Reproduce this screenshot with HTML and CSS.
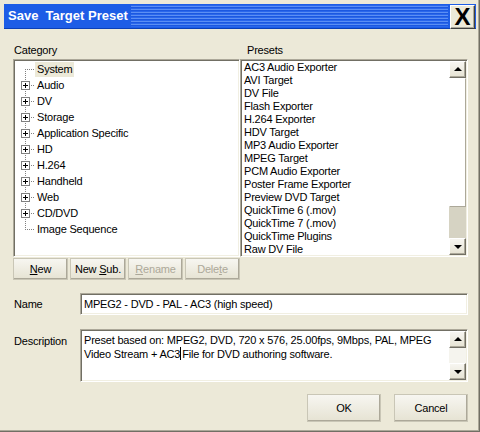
FILE: index.html
```html
<!DOCTYPE html>
<html lang="en">
<head>
    <meta charset="UTF-8">
    <title>Save Target Preset</title>
    <link rel="stylesheet" href="styles.css">
</head>
<body>
    <div class="window">
        <div class="titlebar">
            <span class="title">Save&nbsp; Target Preset</span>
            <span class="stripes"></span>
            <span class="close">X</span>
        </div>

        <div class="content">
            <div class="lists">
                <div class="col">
                    <div class="label">Category</div>
                    <div class="box tree">
                        <div class="node first"><span class="branch"></span><span class="text selected">System</span></div>
                        <div class="node"><span class="branch"><span class="plus"></span></span><span class="text">Audio</span></div>
                        <div class="node"><span class="branch"><span class="plus"></span></span><span class="text">DV</span></div>
                        <div class="node"><span class="branch"><span class="plus"></span></span><span class="text">Storage</span></div>
                        <div class="node"><span class="branch"><span class="plus"></span></span><span class="text">Application Specific</span></div>
                        <div class="node"><span class="branch"><span class="plus"></span></span><span class="text">HD</span></div>
                        <div class="node"><span class="branch"><span class="plus"></span></span><span class="text">H.264</span></div>
                        <div class="node"><span class="branch"><span class="plus"></span></span><span class="text">Handheld</span></div>
                        <div class="node"><span class="branch"><span class="plus"></span></span><span class="text">Web</span></div>
                        <div class="node"><span class="branch"><span class="plus"></span></span><span class="text">CD/DVD</span></div>
                        <div class="node last"><span class="branch"></span><span class="text">Image Sequence</span></div>
                    </div>
                    <div class="tree-buttons">
                        <button class="btn"><u>N</u>ew</button>
                        <button class="btn wide">New <u>S</u>ub.</button>
                        <button class="btn" disabled><u>R</u>ename</button>
                        <button class="btn" disabled>Dele<u>t</u>e</button>
                    </div>
                </div>

                <div class="col">
                    <div class="label presets-label">Presets</div>
                    <div class="box listbox">
                        <ul class="items">
                            <li>AC3 Audio Exporter</li>
                            <li>AVI Target</li>
                            <li>DV File</li>
                            <li>Flash Exporter</li>
                            <li>H.264 Exporter</li>
                            <li>HDV Target</li>
                            <li>MP3 Audio Exporter</li>
                            <li>MPEG Target</li>
                            <li>PCM Audio Exporter</li>
                            <li>Poster Frame Exporter</li>
                            <li>Preview DVD Target</li>
                            <li>QuickTime 6 (.mov)</li>
                            <li>QuickTime 7 (.mov)</li>
                            <li>QuickTime Plugins</li>
                            <li>Raw DV File</li>
                        </ul>
                        <div class="scrollbar">
                            <span class="arrow up"></span>
                            <span class="thumb"></span>
                            <span class="track"></span>
                            <span class="arrow down"></span>
                        </div>
                    </div>
                </div>
            </div>

            <div class="field name-field">
                <div class="field-label">Name</div>
                <div class="box input">MPEG2 - DVD - PAL - AC3 (high speed)</div>
            </div>

            <div class="field desc-field">
                <div class="field-label">Description</div>
                <div class="box memo">
                    <div class="memo-text">
                        <div>Preset based on: MPEG2, DVD, 720 x 576, 25.00fps, 9Mbps, PAL, MPEG</div>
                        <div>Video Stream + AC3<span class="caret"></span>File for DVD authoring software.</div>
                    </div>
                    <div class="scrollbar">
                        <span class="arrow up"></span>
                        <span class="track light"></span>
                        <span class="arrow down"></span>
                    </div>
                </div>
            </div>

            <div class="actions">
                <button class="btn action">OK</button>
                <button class="btn action">Cancel</button>
            </div>
        </div>
    </div>
</body>
</html>
```

FILE: styles.css
```css
body {
    margin: 0;
    font-family: Tahoma, "Liberation Sans", Arial, sans-serif;
    font-size: 11px;
    letter-spacing: -0.2px;
    color: #000;
    background-color: #ece9d8;
}
.window {
    width: 480px;
    height: 432px;
    box-sizing: border-box;
    padding-top: 4px;
    background-color: #ece9d8;
    box-shadow: inset -1px -1px #716f64, inset -2px -2px #aca899;
}
.titlebar {
    display: flex;
    height: 25px;
    margin: 0 4px;
    background-color: #1d5de6;
    border-bottom: 1px solid #0b3fb7;
    box-sizing: border-box;
}
.title {
    padding-left: 4px;
    margin-right: 3px;
    line-height: 24px;
    font-size: 13px;
    font-weight: bold;
    letter-spacing: 0;
    color: #fff;
    white-space: nowrap;
}
.stripes {
    flex: 1;
    margin: 1px 1px 1px 0;
    background: repeating-linear-gradient(to bottom, #2a67ec 0, #2a67ec 1px, #5b8ff4 1px, #5b8ff4 2px, #1b58e0 2px, #1b58e0 3px);
}
.close {
    width: 25px;
    height: 24px;
    margin: 1px 1px 0 1px;
    box-sizing: border-box;
    background-color: #ece9d8;
    border: 1px solid;
    border-color: #fff #404040 #404040 #fff;
    box-shadow: inset -1px -1px #aca899;
    font-family: "Liberation Sans", Arial, sans-serif;
    font-size: 24px;
    font-weight: bold;
    letter-spacing: 0;
    line-height: 22px;
    text-align: center;
}
.content {
    padding: 15px 12px 0 13px;
}
.lists {
    display: grid;
    grid-template-columns: 227px 228px;
}
.label {
    height: 13px;
    line-height: 13px;
    padding-left: 1px;
    margin-bottom: 2px;
}
.presets-label {
    padding-left: 7px;
}
.box {
    box-sizing: border-box;
    background-color: #fff;
    border: 1px solid;
    border-color: #aca899 #fff #fff #aca899;
    box-shadow: inset 1px 1px #716f64, inset -1px -1px #f1efe2;
    padding: 1px;
}
.tree {
    height: 198px;
    padding-left: 2px;
}
.node {
    display: flex;
    align-items: center;
    height: 16px;
}
.branch {
    position: relative;
    flex: none;
    width: 19px;
    height: 16px;
}
.branch::before {
    content: "";
    position: absolute;
    left: 9px;
    top: 0;
    bottom: 0;
    width: 1px;
    background: repeating-linear-gradient(to bottom, #808080 0, #808080 1px, transparent 1px, transparent 2px);
}
.first .branch::before {
    top: 8px;
}
.last .branch::before {
    bottom: 7px;
}
.branch::after {
    content: "";
    position: absolute;
    left: 9px;
    top: 8px;
    width: 10px;
    height: 1px;
    background: repeating-linear-gradient(to right, #808080 0, #808080 1px, transparent 1px, transparent 2px);
}
.plus {
    position: absolute;
    left: 5px;
    top: 4px;
    z-index: 1;
    width: 9px;
    height: 9px;
    box-sizing: border-box;
    border: 1px solid #808080;
    background:
        linear-gradient(#000, #000) center / 5px 1px no-repeat,
        linear-gradient(#000, #000) center / 1px 5px no-repeat,
        #fff;
}
.text {
    padding: 0 2px;
    line-height: 15px;
    white-space: nowrap;
}
.selected {
    background-color: #ece9d8;
}
.tree-buttons {
    display: grid;
    grid-template-columns: 55px 56px 55px 55px;
    gap: 2px;
    margin-top: 1px;
}
.btn {
    height: 22px;
    padding: 0;
    box-sizing: border-box;
    font-family: inherit;
    font-size: 11px;
    letter-spacing: -0.2px;
    color: #000;
    background: linear-gradient(#f7f6f1, #e6e3d3);
    border: 1px solid;
    border-color: #fff #716f64 #716f64 #fff;
    box-shadow: inset -1px -1px #aca899;
    outline: 1px solid #c9c6b6;
    outline-offset: -1px;
}
.btn:disabled {
    color: #aca899;
}
.listbox {
    display: flex;
    height: 198px;
}
.items {
    flex: 1;
    list-style: none;
    margin: 0;
    padding: 0 0 0 2px;
    overflow: hidden;
}
.items li {
    height: 13px;
    line-height: 13px;
    white-space: nowrap;
}
.scrollbar {
    display: flex;
    flex-direction: column;
    width: 17px;
    flex: none;
}
.arrow {
    position: relative;
    height: 17px;
    flex: none;
    box-sizing: border-box;
    background: linear-gradient(#f7f6f1, #e6e3d3);
    border: 1px solid;
    border-color: #fff #716f64 #716f64 #fff;
    box-shadow: inset -1px -1px #aca899;
}
.arrow::after {
    content: "";
    position: absolute;
    left: 4px;
    top: 5px;
    border-left: 4px solid transparent;
    border-right: 4px solid transparent;
}
.up::after {
    border-bottom: 4px solid #000;
}
.down::after {
    top: 6px;
    border-top: 4px solid #000;
}
.thumb {
    height: 129px;
    flex: none;
    box-sizing: border-box;
    background:
        linear-gradient(#c9c6b6, #c9c6b6) 0 3px / 100% 1px no-repeat,
        linear-gradient(#c9c6b6, #c9c6b6) 0 6px / 100% 1px no-repeat,
        linear-gradient(#c9c6b6, #c9c6b6) 0 bottom 3px / 100% 1px no-repeat,
        linear-gradient(#c9c6b6, #c9c6b6) 0 bottom 6px / 100% 1px no-repeat,
        #f6f5ef;
    border: 1px solid;
    border-color: #fff #aca899 #aca899 #fff;
}
.track {
    flex: 1;
    background-color: #d6d3c3;
}
.track.light {
    background-color: #f5f4ee;
}
.field {
    display: flex;
}
.field-label {
    width: 67px;
    flex: none;
    padding-left: 1px;
    box-sizing: border-box;
}
.name-field {
    margin-top: 13px;
    align-items: center;
}
.input {
    width: 388px;
    height: 22px;
    padding: 0 3px;
    line-height: 20px;
    white-space: nowrap;
}
.desc-field {
    margin-top: 14px;
}
.desc-field .field-label {
    padding-top: 6px;
}
.memo {
    display: flex;
    width: 388px;
    height: 53px;
}
.memo-text {
    flex: 1;
    padding: 2px 0 0 2px;
    line-height: 14px;
    white-space: nowrap;
    overflow: hidden;
}
.caret {
    display: inline-block;
    width: 1px;
    height: 13px;
    margin: 0 1px -2px 0;
    background-color: #000;
}
.actions {
    display: flex;
    justify-content: flex-end;
    gap: 13px;
    margin-top: 12px;
}
.action {
    width: 74px;
    height: 28px;
}
```
